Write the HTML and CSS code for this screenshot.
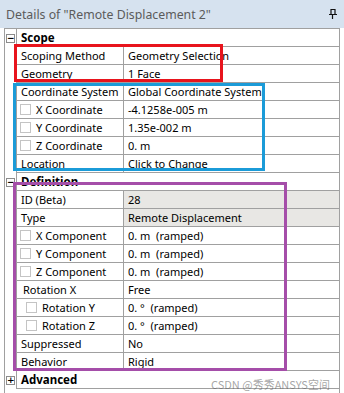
FILE: index.html
```html
<!DOCTYPE html>
<html lang="en">
<head>
    <meta charset="UTF-8">
    <meta name="viewport" content="width=device-width, initial-scale=1.0">
    <title>Details of "Remote Displacement 2"</title>
    <link rel="stylesheet" href="styles.css">
</head>
<body>
    <div class="titlebar">
        <span class="title">Details of "Remote Displacement 2"</span>
        <svg class="pin" width="8" height="10" viewBox="0 0 8 10">
            <path d="M2 0.5h4v5h-4z M0 5.5h8 M3.5 5.5v4.5" fill="none" stroke="#111" stroke-width="1.2"/>
        </svg>
    </div>

    <div class="panel">
        <div class="group-head">
            <div class="gutter"><span class="toggle">&minus;</span></div>
            <div class="group-name">Scope</div>
        </div>
        <div class="row"><div class="name">Scoping Method</div><div class="val">Geometry Selection</div></div>
        <div class="row"><div class="name">Geometry</div><div class="val">1 Face</div></div>
        <div class="row"><div class="name">Coordinate System</div><div class="val">Global Coordinate System</div></div>
        <div class="row"><div class="name"><span class="check"></span>X Coordinate</div><div class="val">-4.1258e-005 m</div></div>
        <div class="row"><div class="name"><span class="check"></span>Y Coordinate</div><div class="val">1.35e-002 m</div></div>
        <div class="row"><div class="name"><span class="check"></span>Z Coordinate</div><div class="val">0. m</div></div>
        <div class="row"><div class="name">Location</div><div class="val">Click to Change</div></div>

        <div class="group-head">
            <div class="gutter"><span class="toggle">&minus;</span></div>
            <div class="group-name">Definition</div>
        </div>
        <div class="row readonly"><div class="name">ID (Beta)</div><div class="val">28</div></div>
        <div class="row readonly"><div class="name">Type</div><div class="val">Remote Displacement</div></div>
        <div class="row"><div class="name"><span class="check"></span>X Component</div><div class="val">0. m&nbsp; (ramped)</div></div>
        <div class="row"><div class="name"><span class="check"></span>Y Component</div><div class="val">0. m&nbsp; (ramped)</div></div>
        <div class="row"><div class="name"><span class="check"></span>Z Component</div><div class="val">0. m&nbsp; (ramped)</div></div>
        <div class="row"><div class="name sub">Rotation X</div><div class="val">Free</div></div>
        <div class="row"><div class="name sub"><span class="check"></span>Rotation Y</div><div class="val">0. &deg;&nbsp; (ramped)</div></div>
        <div class="row"><div class="name sub"><span class="check"></span>Rotation Z</div><div class="val">0. &deg;&nbsp; (ramped)</div></div>
        <div class="row"><div class="name">Suppressed</div><div class="val">No</div></div>
        <div class="row"><div class="name">Behavior</div><div class="val">Rigid</div></div>

        <div class="group-head">
            <div class="gutter"><span class="toggle">+</span></div>
            <div class="group-name">Advanced</div>
        </div>
    </div>

    <div class="mark mark-red"></div>
    <div class="mark mark-blue"></div>
    <div class="mark mark-purple"></div>
    <div class="watermark">CSDN @秀秀ANSYS空间</div>
</body>
</html>
```

FILE: styles.css
```css
body {
    margin: 0;
    padding: 0;
    background: #fff;
    font-family: "Noto Sans", "Liberation Sans", sans-serif;
    font-size: 11px;
    color: #000;
    position: relative;
    height: 393px;
    overflow: hidden;
}
.titlebar {
    height: 28px;
    background-color: #d6e2ef;
    display: flex;
    align-items: center;
    justify-content: space-between;
    padding: 0 7px 0 6px;
}
.title {
    font-size: 12.3px;
    color: #5b5b5b;
}
.pin {
    display: block;
}
.panel {
    margin-left: 4px;
    width: 334px;
    height: 365px;
    border-left: 1px solid #a0a0a0;
    border-right: 1px solid #a0a0a0;
    border-top: 1px solid #a0a0a0;
}
.group-head {
    display: flex;
    height: 18px;
}
.gutter {
    width: 11px;
    display: flex;
    align-items: center;
}
.toggle {
    box-sizing: border-box;
    width: 9px;
    height: 9px;
    margin-left: 1px;
    border: 1px solid #8c8c8c;
    font-size: 9px;
    line-height: 6px;
    text-align: center;
    font-weight: bold;
    font-family: "DejaVu Sans", sans-serif;
}
.group-name {
    flex: 1;
    border-left: 1px solid #a0a0a0;
    border-bottom: 1px solid #a0a0a0;
    font-weight: bold;
    font-size: 11.5px;
    line-height: 17px;
    padding-left: 4px;
}
.row {
    display: flex;
    height: 18px;
    margin-left: 11px;
    border-left: 1px solid #a0a0a0;
    border-bottom: 1px solid #a0a0a0;
    box-sizing: border-box;
}
.name {
    box-sizing: border-box;
    width: 107px;
    border-right: 1px solid #a0a0a0;
    padding-left: 4px;
    line-height: 17px;
    display: flex;
    align-items: center;
    white-space: nowrap;
}
.name.sub {
    padding-left: 6px;
}
.name.sub .check {
    margin-left: 3px;
}
.val {
    flex: 1;
    padding-left: 4px;
    line-height: 17px;
    white-space: nowrap;
}
.readonly .val {
    background-color: #e8e7e4;
}
.check {
    box-sizing: border-box;
    width: 11px;
    height: 11px;
    border: 1px solid #c4c4c4;
    background: #fff;
    margin-left: -1px;
    margin-right: 5px;
    flex: none;
}
.mark {
    position: absolute;
    box-sizing: border-box;
    border: 3px solid;
}
.mark-red {
    left: 14px;
    top: 44px;
    width: 209px;
    height: 38px;
    border-color: #e8141d;
}
.mark-blue {
    left: 13px;
    top: 83px;
    width: 252px;
    height: 88px;
    border-color: #1b9bd8;
}
.mark-purple {
    left: 13px;
    top: 182px;
    width: 274px;
    height: 189px;
    border-color: #a54ea9;
}
.watermark {
    position: absolute;
    left: 211px;
    top: 376px;
    font-family: "Noto Sans CJK SC", sans-serif;
    font-size: 11px;
    color: rgba(90, 90, 90, 0.55);
}
```
